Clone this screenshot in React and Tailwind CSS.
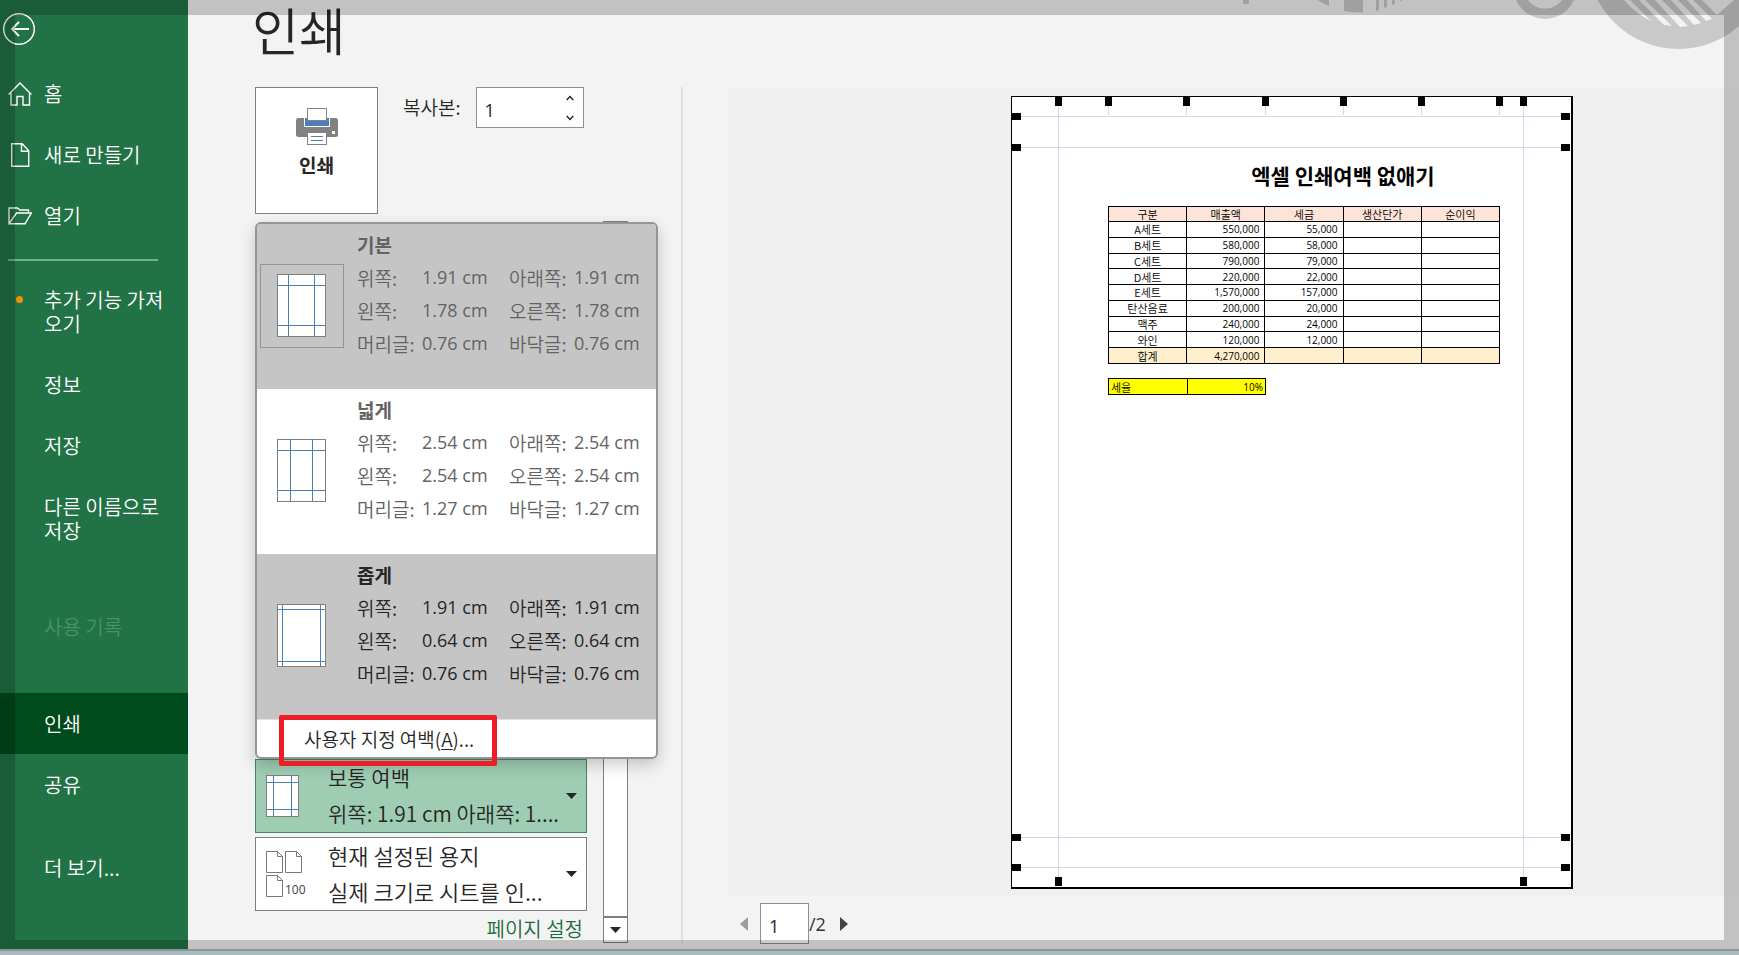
import React from "react";

const marginPresets = [
  {
    name: "기본",
    selected: true,
    shade: "bg-[#c5c5c5] text-[#636363]",
    guides: { x: [11, 37], y: [11, 51] },
    rows: [
      ["위쪽:", "1.91 cm", "아래쪽:", "1.91 cm"],
      ["왼쪽:", "1.78 cm", "오른쪽:", "1.78 cm"],
      ["머리글:", "0.76 cm", "바닥글:", "0.76 cm"],
    ],
  },
  {
    name: "넓게",
    selected: false,
    shade: "bg-white text-[#636363]",
    guides: { x: [13, 35], y: [11, 51] },
    rows: [
      ["위쪽:", "2.54 cm", "아래쪽:", "2.54 cm"],
      ["왼쪽:", "2.54 cm", "오른쪽:", "2.54 cm"],
      ["머리글:", "1.27 cm", "바닥글:", "1.27 cm"],
    ],
  },
  {
    name: "좁게",
    selected: false,
    shade: "bg-[#c5c5c5] text-[#262626]",
    guides: { x: [5, 43], y: [5, 57] },
    rows: [
      ["위쪽:", "1.91 cm", "아래쪽:", "1.91 cm"],
      ["왼쪽:", "0.64 cm", "오른쪽:", "0.64 cm"],
      ["머리글:", "0.76 cm", "바닥글:", "0.76 cm"],
    ],
  },
];

const salesRows = [
  ["A세트", "550,000", "55,000"],
  ["B세트", "580,000", "58,000"],
  ["C세트", "790,000", "79,000"],
  ["D세트", "220,000", "22,000"],
  ["E세트", "1,570,000", "157,000"],
  ["탄산음료", "200,000", "20,000"],
  ["맥주", "240,000", "24,000"],
  ["와인", "120,000", "12,000"],
];

function MarginThumb({ width, height, xs, ys }) {
  return (
    <svg width={width} height={height} viewBox={`0 0 ${width} ${height}`} shapeRendering="crispEdges" aria-hidden="true">
      <rect x="0.5" y="0.5" width={width - 1} height={height - 1} fill="#fff" stroke="#7f7f7f" />
      {xs.map((x) => (
        <rect key={`x${x}`} x={x} y="1" width="1" height={height - 2} fill="#4a7fb8" />
      ))}
      {ys.map((y) => (
        <rect key={`y${y}`} x="1" y={y} width={width - 2} height="1" fill="#4a7fb8" />
      ))}
    </svg>
  );
}

function BackIcon() {
  return (
    <svg width="34" height="34" viewBox="0 0 34 34" fill="none" stroke="#fff" strokeWidth="1.5" aria-hidden="true">
      <circle cx="17" cy="17" r="15.3" />
      <path d="M27 17H10M17 10l-7 7 7 7" strokeWidth="1.8" />
    </svg>
  );
}

function HomeIcon() {
  return (
    <svg width="24" height="24" viewBox="0 0 24 24" fill="none" stroke="#fff" strokeWidth="1.4" aria-hidden="true">
      <path d="M.6 12.4 12 1l11.4 11.4M3 10.5V23h6v-8.5h6V23h6.5V10.5" />
    </svg>
  );
}

function NewIcon() {
  return (
    <svg width="24" height="24" viewBox="0 0 24 24" fill="none" stroke="#fff" strokeWidth="1.4" aria-hidden="true">
      <path d="M3.7.7h10.5l6.5 7v15.6h-17zM13.5.7v7.5h7" />
    </svg>
  );
}

function OpenIcon() {
  return (
    <svg width="24" height="18" viewBox="0 0 24 18" fill="none" stroke="#fff" strokeWidth="1.4" aria-hidden="true">
      <path d="M1 16.8V1h8.500l2.500 2h8.500v3M1 16.8h16L23.3 6H8.500z" />
    </svg>
  );
}

function PrinterIcon() {
  return (
    <svg width="42" height="37" viewBox="0 0 42 37" aria-hidden="true">
      <rect x="0" y="10" width="42" height="19" rx="2.5" fill="#828282" />
      <path d="M8 10h26v9H8z" fill="#fff" />
      <path d="M9 10h24v8H9z" fill="#4a80b8" />
      <rect x="11.5" y="0.5" width="19" height="12" fill="#fff" stroke="#828282" />
      <rect x="11.5" y="24.5" width="19" height="12" fill="#fff" stroke="#828282" />
      <path d="M15 28.5h12M15 32.5h12" stroke="#4a80b8" />
      <rect x="36" y="23" width="3" height="3" fill="#fff" />
    </svg>
  );
}

function ScaleIcon() {
  const sheet = "M.5.5h11l5 5v16H.5zM11.5.5v5h5";
  return (
    <svg width="40" height="46" viewBox="0 0 40 46" fill="none" stroke="#777" aria-hidden="true">
      <path d={sheet} />
      <path d={sheet} transform="translate(19 0)" />
      <path d={sheet} transform="translate(0 24)" />
      <text x="19" y="43" fontSize="12" fill="#444" stroke="none" fontWeight="500" fontFamily="Open Sans, sans-serif">
        100
      </text>
    </svg>
  );
}

function Caret({ className }) {
  return (
    <svg width="11" height="6" viewBox="0 0 11 6" className={className} fill="#262626" aria-hidden="true">
      <path d="M0 0h11L5.5 6z" />
    </svg>
  );
}

function CornerArt() {
  return (
    <svg
      className="pointer-events-none absolute top-0 right-0"
      width="500"
      height="60"
      viewBox="1239 0 500 60"
      fill="#c9c9c9"
      aria-hidden="true"
    >
      <path d="M1243 0h6v4h-6zM1317 0h12v6zM1344 0h19v12.5q-10 0-19-1.5zM1376 0h3v10l-3 1zM1384 0h3v7l-3 1zM1392 0h3v4l-3 1zM1400 0h3l-3 1z" />
      <circle cx="1545" cy="-12.6" r="31.6" />
      <circle cx="1545" cy="-12.6" r="21.2" fill="#f3f3f3" />
      <circle cx="1678.5" cy="-42" r="91" />
      <path
        fill="#f3f3f3"
        d="M1624 0h6l21 21q-15-7-27-21zM1639 0h6l27 26-8-1zM1655 0h7l26 26-8 1zM1671 0h7l23 23-7 2zM1687 0h6l19 19-6 2zM1702 0h32l-17 15z"
      />
    </svg>
  );
}

function NavItem({ icon, children, active, disabled, tall, className = "" }) {
  return (
    <li className={className}>
      <button
        type="button"
        disabled={disabled}
        className={`flex w-full items-center text-left leading-6 ${tall ? "h-[85px]" : "h-[61px]"} ${
          active ? "bg-[#004b1c]" : ""
        } ${disabled ? "text-[#4d9068]" : "text-white"}`}
      >
        <span className="flex w-11 shrink-0 pl-2">{icon}</span>
        <span className="w-32">{children}</span>
      </button>
    </li>
  );
}

function Sidebar() {
  return (
    <nav className="w-[188px] shrink-0 bg-[#217346] text-[20px]">
      <div className="h-[63px] pt-3 pl-[2px]">
        <button type="button" aria-label="뒤로" className="block">
          <BackIcon />
        </button>
      </div>
      <ul>
        <NavItem icon={<HomeIcon />}>홈</NavItem>
        <NavItem icon={<NewIcon />}>새로 만들기</NavItem>
        <NavItem icon={<OpenIcon />}>열기</NavItem>
        <li className="mt-[13px] mr-[30px] mb-2 ml-2 h-[2px] bg-[#6fb48c]" />
        <NavItem tall icon={<span className="mb-6 ml-2 size-[7px] rounded-full bg-[#f29100]" />}>
          추가 기능 가져오기
        </NavItem>
        <NavItem>정보</NavItem>
        <NavItem>저장</NavItem>
        <NavItem tall>다른 이름으로 저장</NavItem>
        <NavItem disabled className="mt-[35px]">
          사용 기록
        </NavItem>
        <NavItem active className="mt-[36px]">
          인쇄
        </NavItem>
        <NavItem>공유</NavItem>
        <NavItem className="mt-[22px]">더 보기...</NavItem>
      </ul>
    </nav>
  );
}

function MarginMenu() {
  return (
    <div className="relative z-10 w-[403px] rounded-[6px] border-2 border-[#959595] bg-white shadow-[0_6px_16px_rgba(0,0,0,0.2)]">
      {marginPresets.map((preset) => (
        <button
          key={preset.name}
          type="button"
          className={`flex h-[165px] w-full text-left first:rounded-t-[4px] ${preset.shade}`}
        >
          <span
            className={`mt-10 ml-[3px] flex size-[84px] shrink-0 items-start border pt-[9px] pl-4 ${
              preset.selected ? "border-[#959595]" : "border-transparent"
            }`}
          >
            <MarginThumb width={49} height={63} xs={preset.guides.x} ys={preset.guides.y} />
          </span>
          <span className="ml-[13px] block pt-1 text-[19px] leading-[33px]">
            <span className="block font-bold">{preset.name}</span>
            <span className="grid grid-cols-[65px_87px_65px_70px]">
              {preset.rows.flat().map((cell, i) => (
                <span key={i} className={i % 2 ? "font-['Open_Sans',sans-serif] text-[18px] font-normal" : ""}>
                  {cell}
                </span>
              ))}
            </span>
          </span>
        </button>
      ))}
      <button
        type="button"
        className="relative flex h-[38px] w-full items-center rounded-b-[4px] border-t border-[#e1e1e1] pt-px pl-[47px] text-[19px] text-[#262626]"
      >
        사용자 지정 여백(<u className="underline-offset-2">A</u>)...
        <span className="pointer-events-none absolute -top-[5px] left-[22px] h-[51px] w-[218px] rounded-[2px] border-[5px] border-[#ee1c24]" />
      </button>
    </div>
  );
}

function SettingButton({ icon, title, detail, className }) {
  return (
    <button
      type="button"
      className={`flex h-[74px] w-full items-center border pr-[9px] text-left leading-9 text-[#262626] ${className}`}
    >
      <span className="flex w-[72px] shrink-0 pl-[10px]">{icon}</span>
      <span className="min-w-0 flex-1 pb-[3px]">
        <span className="block whitespace-nowrap">{title}</span>
        <span className="block whitespace-nowrap">{detail}</span>
      </span>
      <Caret className="shrink-0" />
    </button>
  );
}

function Settings() {
  return (
    <section className="w-[495px] shrink-0 pl-[67px]">
      <div className="flex border-r-2 border-[#e1e1e1]">
        <div className="w-full">
          <div className="flex h-[134px] items-start">
            <button
              type="button"
              className="flex h-[127px] w-[123px] flex-col items-center border border-[#7f7f7f] bg-white pt-5 text-[19px] leading-7 font-bold text-[#262626]"
            >
              <PrinterIcon />
              <span className="mt-[6px]">인쇄</span>
            </button>
            <label htmlFor="copies" className="mt-[6px] ml-[25px] text-[19px] leading-7 text-[#262626]">
              복사본:
            </label>
            <div className="ml-[15px] flex h-[41px] w-[108px] border border-[#8f8f8f] bg-white">
              <input
                id="copies"
                type="text"
                defaultValue="1"
                className="w-[80px] min-w-0 bg-transparent pt-[6px] pl-2 font-['Open_Sans',sans-serif] text-[18px] font-normal text-[#262626] outline-none"
              />
              <div className="flex flex-1 flex-col items-center justify-center gap-[14px]">
                <button type="button" aria-label="복사본 늘리기" className="block">
                  <svg className="block" width="8" height="6" viewBox="0 0 8 6" fill="none" stroke="#262626" strokeWidth="1.5">
                    <path d="M.7 5 4 1.5 7.300 5" />
                  </svg>
                </button>
                <button type="button" aria-label="복사본 줄이기" className="block">
                  <svg className="block" width="8" height="6" viewBox="0 0 8 6" fill="none" stroke="#262626" strokeWidth="1.5">
                    <path d="M.7 1 4 4.500 7.300 1" />
                  </svg>
                </button>
              </div>
            </div>
          </div>
          <div className="flex gap-4">
            <div className="w-[332px] pt-px">
              <MarginMenu />
              <SettingButton
                className="border-[#3f8a5d] bg-[#9fcdb4] text-[21px]"
                icon={<MarginThumb width={33} height={42} xs={[7, 25]} ys={[7, 34]} />}
                title="보통 여백"
                detail="위쪽: 1.91 cm 아래쪽: 1...."
              />
              <SettingButton
                className="mt-1 border-[#7f7f7f] bg-white text-[22px]"
                icon={<ScaleIcon />}
                title="현재 설정된 용지"
                detail="실제 크기로 시트를 인..."
              />
              <p className="mt-1 pr-1 text-right text-[20px] leading-7 text-[#1e6b41]">
                <a href="#page-setup">페이지 설정</a>
              </p>
            </div>
            <div className="flex w-[25px] flex-col border border-[#7f7f7f] bg-white">
              <div className="flex-1" />
              <button
                type="button"
                aria-label="아래로 스크롤"
                className="flex h-[26px] items-center justify-center border-t-2 border-[#7f7f7f]"
              >
                <Caret />
              </button>
            </div>
          </div>
        </div>
      </div>
    </section>
  );
}

function PageGuides() {
  const columns = [96, 174, 253, 331, 409, 487];
  return (
    <svg
      className="pointer-events-none absolute inset-0"
      width="560"
      height="790"
      viewBox="0 0 560 790"
      shapeRendering="crispEdges"
      aria-hidden="true"
    >
      <g fill="#cfd8e4">
        {[46, 511].map((x) => (
          <rect key={x} x={x} y="9" width="1" height="772" />
        ))}
        {[19, 50, 740, 770].map((y) => (
          <rect key={y} x="9" y={y} width="540" height="1" />
        ))}
        {columns.map((x) => (
          <rect key={x} x={x} y="9" width="1" height="9" />
        ))}
      </g>
      <g fill="#000">
        {[46, ...columns, 511].map((x) => (
          <rect key={x} x={x - 3} y="0" width="7" height="9" />
        ))}
        {[46, 511].map((x) => (
          <rect key={x} x={x - 3} y="780" width="7" height="9" />
        ))}
        {[16, 47, 737, 767].map((y) => (
          <React.Fragment key={y}>
            <rect x="0" y={y} width="9" height="7" />
            <rect x="549" y={y} width="9" height="7" />
          </React.Fragment>
        ))}
      </g>
    </svg>
  );
}

function PreviewPage() {
  const cell = "border border-black p-0 leading-[14px]";
  const num = "pr-[5px] text-right font-['Open_Sans',sans-serif] text-[10px] font-normal";
  return (
    <article className="relative h-[793px] w-[562px] border border-r-2 border-b-2 border-black bg-white text-black">
      <PageGuides />
      <div className="ml-24 w-[392px] pt-[63px]">
        <h2 className="pl-[78px] text-center text-[21px] leading-[30px] font-bold">엑셀 인쇄여백 없애기</h2>
        <table className="mt-4 h-[158px] w-full table-fixed border-collapse text-[11px]">
          <thead>
            <tr className="bg-[#fde4d8]">
              {["구분", "매출액", "세금", "생산단가", "순이익"].map((h) => (
                <th key={h} scope="col" className={`${cell} text-center font-[350]`}>
                  {h}
                </th>
              ))}
            </tr>
          </thead>
          <tbody>
            {salesRows.map(([name, sales, tax]) => (
              <tr key={name}>
                <td className={`${cell} text-center`}>{name}</td>
                <td className={`${cell} ${num}`}>{sales}</td>
                <td className={`${cell} ${num}`}>{tax}</td>
                <td className={cell} />
                <td className={cell} />
              </tr>
            ))}
            <tr className="bg-[#fff0cd]">
              <td className={`${cell} text-center`}>합계</td>
              <td className={`${cell} ${num}`}>4,270,000</td>
              <td className={cell} />
              <td className={cell} />
              <td className={cell} />
            </tr>
          </tbody>
        </table>
        <table className="mt-[14px] h-[17px] w-[158px] table-fixed border-collapse bg-[#ffff00] text-[11px]">
          <tbody>
            <tr>
              <th scope="row" className={`${cell} text-left font-[350]`}>
                <span className="pl-[2px]">세율</span>
              </th>
              <td className="border border-black p-0 pr-[2px] text-right font-['Open_Sans',sans-serif] text-[10px] leading-[14px] font-normal">
                10%
              </td>
            </tr>
          </tbody>
        </table>
      </div>
    </article>
  );
}

function Preview() {
  return (
    <section className="min-w-0 flex-1 pt-px pl-[46px]">
      <div className="flex h-[808px] justify-center bg-[#f0f0f0] pt-2 pl-[116px]">
        <PreviewPage />
      </div>
      <div className="mt-[7px] flex h-[41px] items-center pl-[11px] text-[#333]">
        <button type="button" aria-label="이전 페이지">
          <svg className="block" width="8" height="14" viewBox="0 0 8 14" fill="#9c9c9c">
            <path d="M8 0v14L0 7z" />
          </svg>
        </button>
        <input
          type="text"
          aria-label="페이지 번호"
          defaultValue="1"
          className="ml-3 h-full w-[49px] border border-[#8f8f8f] bg-white pt-1 pl-2 font-['Open_Sans',sans-serif] text-[18px] font-normal text-[#262626] outline-none"
        />
        <span className="pt-[2px] font-['Open_Sans',sans-serif] text-[18px] font-normal">/2</span>
        <button type="button" aria-label="다음 페이지" className="ml-[14px]">
          <svg className="block" width="8" height="14" viewBox="0 0 8 14" fill="#444">
            <path d="M0 0v14l8-7z" />
          </svg>
        </button>
      </div>
    </section>
  );
}

export default function App() {
  return (
    <div className="flex min-h-screen flex-col bg-[#a9bac3] font-['Noto_Sans_CJK_KR',sans-serif] font-[350]">
      <div className="relative flex flex-1 bg-[#f3f3f3]">
        <CornerArt />
        <Sidebar />
        <main className="relative min-w-0 flex-1">
          <h1 className="h-[87px] pl-16 text-[51px] leading-[58px] text-[#262626]">인쇄</h1>
          <div className="flex">
            <Settings />
            <Preview />
          </div>
        </main>
        <div className="pointer-events-none absolute inset-0 z-20 border-[15px] border-b-[9px] border-black/20" />
      </div>
      <div className="h-[6px] border-t-2 border-[#8b9599]" />
    </div>
  );
}
